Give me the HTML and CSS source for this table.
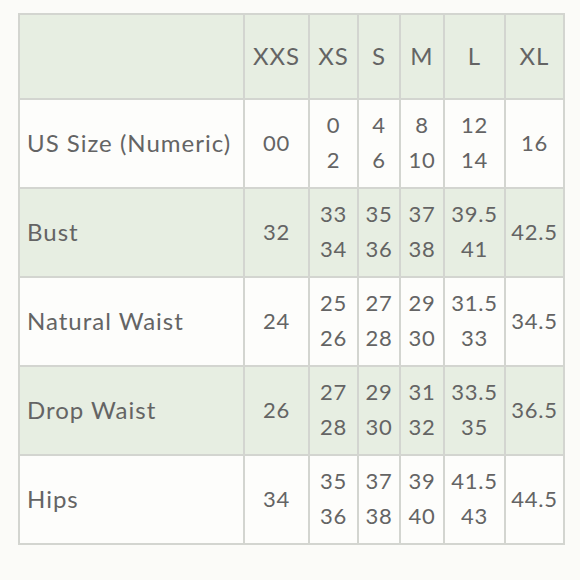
FILE: index.html
```html
<!DOCTYPE html>
<html>
<head>
<meta charset="utf-8">
<link rel="stylesheet" href="styles.css">
</head>
<body>
<table class="chart">
  <colgroup>
    <col class="c0"><col class="c1"><col class="c2"><col class="c3"><col class="c4"><col class="c5"><col class="c6">
  </colgroup>
  <tr class="head">
    <td class="label"></td><td>XXS</td><td>XS</td><td>S</td><td>M</td><td>L</td><td>XL</td>
  </tr>
  <tr class="light">
    <td class="label">US Size (Numeric)</td><td class="num">00</td><td class="num">0<br>2</td><td class="num">4<br>6</td><td class="num">8<br>10</td><td class="num">12<br>14</td><td class="num">16</td>
  </tr>
  <tr class="green">
    <td class="label">Bust</td><td class="num">32</td><td class="num">33<br>34</td><td class="num">35<br>36</td><td class="num">37<br>38</td><td class="num">39.5<br>41</td><td class="num">42.5</td>
  </tr>
  <tr class="light">
    <td class="label">Natural Waist</td><td class="num">24</td><td class="num">25<br>26</td><td class="num">27<br>28</td><td class="num">29<br>30</td><td class="num">31.5<br>33</td><td class="num">34.5</td>
  </tr>
  <tr class="green">
    <td class="label">Drop Waist</td><td class="num">26</td><td class="num">27<br>28</td><td class="num">29<br>30</td><td class="num">31<br>32</td><td class="num">33.5<br>35</td><td class="num">36.5</td>
  </tr>
  <tr class="light">
    <td class="label">Hips</td><td class="num">34</td><td class="num">35<br>36</td><td class="num">37<br>38</td><td class="num">39<br>40</td><td class="num">41.5<br>43</td><td class="num">44.5</td>
  </tr>
</table>
</body>
</html>
```
FILE: styles.css
```css
html, body {
  margin: 0;
  padding: 0;
  background: #fbfbf8;
}
body {
  padding: 13px 0 0 18px;
}
.chart {
  border-collapse: collapse;
  table-layout: fixed;
  width: 545px;
  font-family: Lato, "Open Sans", sans-serif;
  font-size: 24px;
  color: #646464;
  letter-spacing: 1px;
}
.c0 { width: 225px; }
.c1 { width: 65px; }
.c2 { width: 49px; }
.c3 { width: 42px; }
.c4 { width: 44px; }
.c5 { width: 61px; }
.c6 { width: 59px; }
.chart td {
  border: 2px solid #d3d5d0;
  text-align: center;
  vertical-align: middle;
  padding: 0 0 3px 0;
  line-height: 35px;
}
.chart td.num {
  font-size: 22px;
  letter-spacing: 0.8px;
}
.chart td.label {
  text-align: left;
  padding-left: 7px;
}
.head td {
  height: 80px;
  background: #e7eee2;
}
.light td {
  height: 84px;
  background: #fdfdfb;
}
.green td {
  height: 84px;
  background: #e7eee2;
}
```
